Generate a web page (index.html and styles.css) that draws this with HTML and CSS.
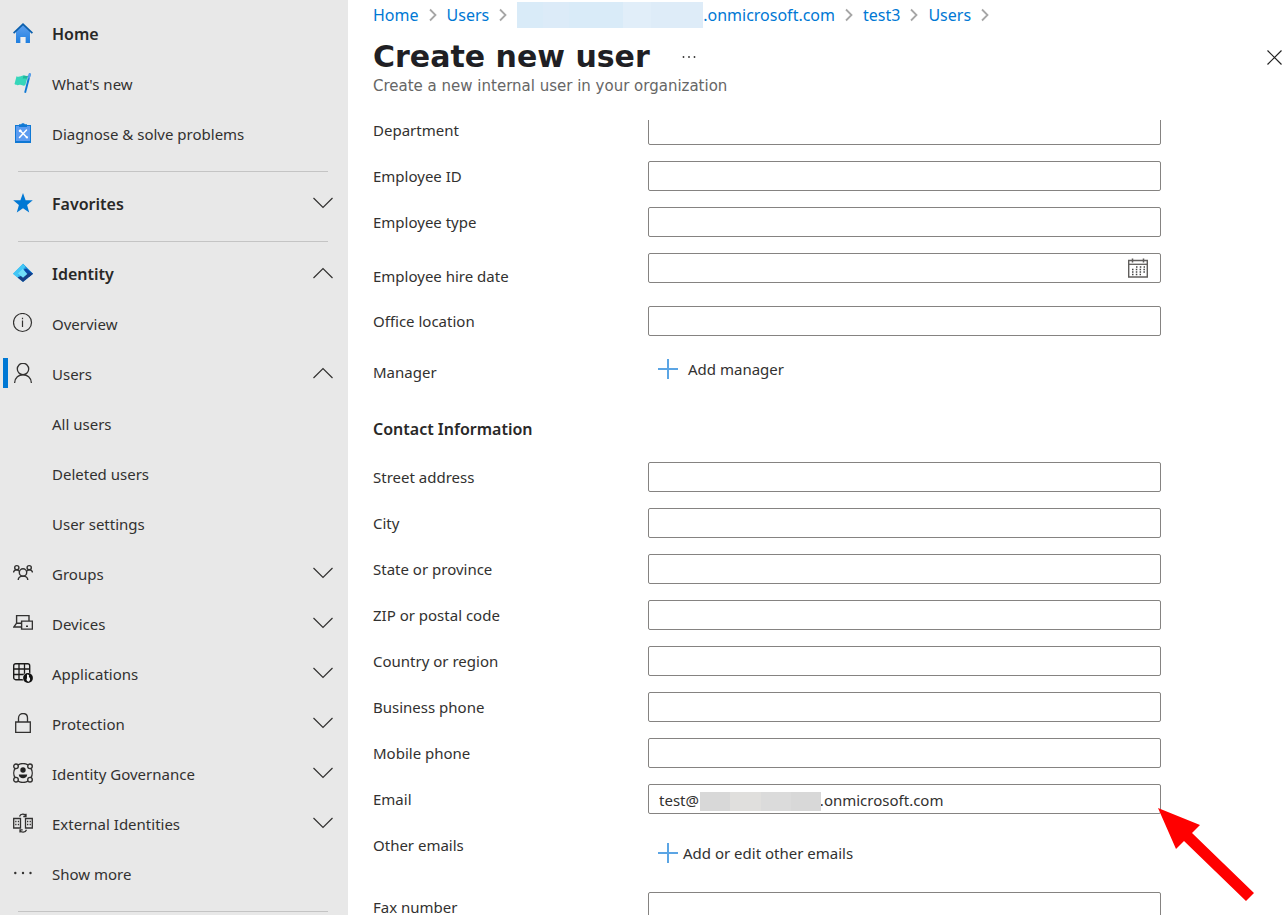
FILE: index.html
```html
<!DOCTYPE html>
<html lang="en">
<head>
<meta charset="utf-8">
<meta name="viewport" content="width=device-width, initial-scale=1">
<title>Create new user</title>
<link rel="stylesheet" href="styles.css">
</head>
<body>
<svg class="defs" aria-hidden="true">
  <defs>
    <linearGradient id="sky" x1="0" y1="0" x2="0" y2="1"><stop offset="0" stop-color="#5ea0ef"/><stop offset="1" stop-color="#1f7fe0"/></linearGradient>
    <symbol id="down" viewBox="0 0 20 12"><path d="M.5 1l9.5 9.5L19.500 1" fill="none" stroke="#323130" stroke-width="1.2"/></symbol>
    <symbol id="up" viewBox="0 0 20 12"><path d="M.5 11L10 1.500l9.500 9.500" fill="none" stroke="#323130" stroke-width="1.2"/></symbol>
    <symbol id="next" viewBox="0 0 8 14"><path d="M1 1.500l5.500 5.500L1 12.500" fill="none" stroke="#a6a6a6" stroke-width="1.800"/></symbol>
    <symbol id="plus" viewBox="0 0 20 20"><path d="M10 0v20M0 10h20" fill="none" stroke="#5ba5e4" stroke-width="2"/></symbol>
  </defs>
</svg>
<div class="app">
  <nav class="sidebar" aria-label="Main">
    <button class="item strong"><svg class="icon" viewBox="0 0 20 20"><path d="M3 8.500L10 2l7 6.500V19.500a.5.5 0 0 1-.5.5h-4v-6h-5v6h-4a.5.5 0 0 1-.5-.5z" fill="url(#sky)"/><path d="M7.700 14h4.600v6H7.700z" fill="#efefef"/><path d="M10 0l10 9.600-1.200 1.200L10 2.600 1.200 10.800 0 9.600z" fill="#0a5fae"/></svg><span>Home</span></button>
    <button class="item"><svg class="icon" viewBox="0 0 20 20"><path d="M16 .2l2 .5L13 20l-1.800-.5z" fill="#0f78d4"/><path d="M16 .2l2 .5-1.400 5-1.700-.5z" fill="#5ea0ef"/><path d="M3.500 3.200c3 2 5.500-1.800 8-.4 1.500.7 2.500.3 3.500 0l-2.700 9.400c-2.300 1.300-3.300-.8-5.500-.4-1.800.4-3.300.8-5.300-.8z" fill="#36d6ba"/><path d="M10.500 2.600c1.800 0 3 .8 4.500.2l-.8 2.700c-1.500.5-3-.5-4.500.2z" fill="#1fb89f"/></svg><span>What's new</span></button>
    <button class="item"><svg class="icon" viewBox="0 0 20 20"><path d="M2 2h16v18H2z" fill="#0f78d4"/><path d="M3 3h14v15H3z" fill="#5b9bf0"/><path d="M6 1.200h2.300C8.500 0 11.500 0 11.700 1.200H14V4H6z" fill="#0f78d4"/><path d="M7 7.500l7 7M13.500 7l-7 7.500" stroke="#fff" stroke-width="1.500" stroke-linecap="round"/><path d="M5.700 7.200l1.600-1 1.500 1.600-1 1.500-1.800-.2z" fill="#fff"/><path d="M13 13l2.200.8-.8 1.700-1.800-.6z" fill="#fff"/></svg><span>Diagnose &amp; solve problems</span></button>
    <hr class="rule">
    <button class="item strong" aria-expanded="false"><svg class="icon" viewBox="0 0 20 20"><path d="M10 0l2.600 7.200h7.200l-5.700 4.700 2.100 7.600L10 15.200l-6.200 4.300 2.100-7.600L.2 7.200h7.200z" fill="#0078d4"/></svg><span>Favorites</span><svg class="chevron"><use href="#down"/></svg></button>
    <hr class="rule">
    <button class="item strong" aria-expanded="true"><svg class="icon" viewBox="0 0 20 20"><path d="M10 .7L20 10.800 10 19 0 10.800z" fill="#35b8f1"/><path d="M10 .7L20 10.800l-5.500 2L10 8.500z" fill="#2196dd"/><path d="M13.500 5.500l6.500 5.300-4 3.300L10 9l1-2.500z" fill="#0b4aa8"/><path d="M4.500 14.500L10 12l6-2 4 .8L10 19z" fill="#173f86"/><path d="M0 10.800L10 .7l2.500 3L5.500 11l-1 3.500z" fill="#43c6f5"/><path d="M9.800 5.800l4.500 5.200-4.300 3.700-5-4.200z" fill="#72def8"/></svg><span>Identity</span><svg class="chevron"><use href="#up"/></svg></button>
    <button class="item"><svg class="icon" viewBox="0 0 20 20"><circle cx="9.500" cy="9.500" r="9" fill="none" stroke="#323130" stroke-width="1.2"/><path d="M9.500 7.500v6.500M9.500 4.800v1.400" stroke="#323130" stroke-width="1.200"/></svg><span>Overview</span></button>
    <button class="item current" aria-expanded="true"><svg class="icon" viewBox="0 0 20 20"><g fill="none" stroke="#323130" stroke-width="1.300"><circle cx="10" cy="6" r="5.700"/><path d="M1.600 20C2 9 18 9 18.400 20"/></g></svg><span>Users</span><svg class="chevron"><use href="#up"/></svg></button>
    <button class="item child"><span>All users</span></button>
    <button class="item child"><span>Deleted users</span></button>
    <button class="item child"><span>User settings</span></button>
    <button class="item" aria-expanded="false"><svg class="icon" viewBox="0 0 20 20"><g fill="none" stroke="#323130" stroke-width="1.400"><circle cx="10" cy="9.500" r="3.700"/><circle cx="3.800" cy="4.700" r="2.100"/><circle cx="16.200" cy="4.700" r="2.100"/><path d="M5.200 17c.3-5.200 9.300-5.200 9.600 0M.5 9.500C1 6.500 4 6 6.500 8.200M19.500 9.500C19 6.500 16 6 13.500 8.200"/></g></svg><span>Groups</span><svg class="chevron"><use href="#down"/></svg></button>
    <button class="item" aria-expanded="false"><svg class="icon" viewBox="0 0 20 20"><g fill="none" stroke="#323130" stroke-width="1.400"><path d="M3.600 10V2.600H16V8M3.600 10.200H8.500M3.600 10.200L.8 14h7.700"/><path d="M8.600 8.100h10.800v8H8.600z"/><path d="M13 13.300h2"/></g></svg><span>Devices</span><svg class="chevron"><use href="#down"/></svg></button>
    <button class="item" aria-expanded="false"><svg class="icon" viewBox="0 0 20 20"><rect x=".7" y=".7" width="16" height="16" rx="2" fill="none" stroke="#1b1a19" stroke-width="1.400"/><path d="M6 .7v16M11.500.7v16M.7 6h16M.7 11.500h16" stroke="#1b1a19" stroke-width="1.300"/><circle cx="15" cy="15" r="5.500" fill="#e8e8e8"/><circle cx="15" cy="15" r="4.900" fill="#111"/><path d="M14 11.500c1.800-.3 2.600 1 1.800 2.300 2 1.500 1.700 3.500 0 5-1.800-.5-3-2-1.800-3.500z" fill="#f5f5f5"/></svg><span>Applications</span><svg class="chevron"><use href="#down"/></svg></button>
    <button class="item" aria-expanded="false"><svg class="icon" viewBox="0 0 20 20"><g fill="none" stroke="#323130" stroke-width="1.300"><path d="M2.700 9h14.600v10.400H2.700zM5.500 9V5c0-6 9-6 9 0v4"/></g></svg><span>Protection</span><svg class="chevron"><use href="#down"/></svg></button>
    <button class="item" aria-expanded="false"><svg class="icon" viewBox="0 0 20 20"><g fill="none" stroke="#323130" stroke-width="1.400"><circle cx="3" cy="3.300" r="2.300"/><circle cx="17" cy="3.300" r="2.300"/><circle cx="3" cy="16.700" r="2.300"/><circle cx="17" cy="16.700" r="2.300"/><path d="M5 1.800C8 .3 12 .3 15 1.800M5 18.200c3 1.500 7 1.500 10 0M2 5.500C.4 8 .4 12 2 14.500M18 5.500c1.600 2.500 1.600 6.500 0 9"/></g><circle cx="10" cy="7" r="2.700" fill="#222"/><path d="M5.800 11.400h8.400c0 5-8.400 5-8.400 0z" fill="#222"/></svg><span>Identity Governance</span><svg class="chevron"><use href="#down"/></svg></button>
    <button class="item" aria-expanded="false"><svg class="icon" viewBox="0 0 20 20"><g fill="none" stroke="#323130" stroke-width="1.300"><path d="M.7 5.500h6.800v9.500H.7zM12.500 5.500h6.800v9.500h-6.800z"/><path d="M6.500 3.500c1-3.200 5.500-3.200 6.500-.5M13 .8v2.700h-2.700M13.500 16.700c-1 3.200-5.500 3.200-6.500.5M7 19.500v-2.700h2.700"/><path d="M2.200 8.500h1.300M4.800 8.500h1.300M2.200 11.500h1.300M4.800 11.500h1.300M14 8.500h1.300M16.600 8.500h1.300M14 11.500h1.300M16.600 11.500h1.300"/></g></svg><span>External Identities</span><svg class="chevron"><use href="#down"/></svg></button>
    <button class="item"><svg class="icon" viewBox="0 0 20 20"><g fill="#323130"><circle cx="2.300" cy="10" r="1.200"/><circle cx="10" cy="10" r="1.200"/><circle cx="17.500" cy="10" r="1.200"/></g></svg><span>Show more</span></button>
    <hr class="rule">
  </nav>

  <main class="main">
    <nav class="crumbs" aria-label="Breadcrumb">
      <a href="#">Home</a><svg class="next"><use href="#next"/></svg>
      <a href="#">Users</a><svg class="next"><use href="#next"/></svg>
      <a href="#" class="tenant"><span class="mask"></span>.onmicrosoft.com</a><svg class="next"><use href="#next"/></svg>
      <a href="#">test3</a><svg class="next"><use href="#next"/></svg>
      <a href="#">Users</a><svg class="next"><use href="#next"/></svg>
    </nav>
    <header class="head">
      <h1 class="title">Create new user</h1>
      <button class="plain" aria-label="More"><svg class="dots" viewBox="0 0 14 4"><g fill="#323130"><circle cx="1.500" cy="2" r=".9"/><circle cx="7" cy="2" r=".9"/><circle cx="12.500" cy="2" r=".9"/></g></svg></button>
      <button class="plain close" aria-label="Close"><svg class="cross" viewBox="0 0 15 15"><path d="M.5.5l14 14M14.500.5l-14 14" stroke="#222" stroke-width="1.200"/></svg></button>
    </header>
    <p class="subtitle">Create a new internal user in your organization</p>

    <div class="scroller">
      <form class="form">
        <div class="row"><label for="dept">Department</label><input class="box" id="dept" type="text"></div>
        <div class="row"><label for="eid">Employee ID</label><input class="box" id="eid" type="text"></div>
        <div class="row"><label for="etype">Employee type</label><input class="box" id="etype" type="text"></div>
        <div class="row date"><label for="hire">Employee hire date</label>
          <div class="field"><input class="box" id="hire" type="text"><svg class="calendar" viewBox="0 0 20 20"><path d="M.7 2.500h18.600v16.500H.7z" fill="none" stroke="#605e5c" stroke-width="1.400"/><path d="M0 6.300h20" stroke="#605e5c" stroke-width="1.300"/><path d="M4.500.5v4M15.500.5v4" stroke="#605e5c" stroke-width="1.500"/><path d="M8 9h9M4 11.500h13M4 14h13M4 16.500h9" stroke="#444" stroke-width="1.300" stroke-dasharray="1.500 2.300"/></svg></div></div>
        <div class="row"><label for="office">Office location</label><input class="box" id="office" type="text"></div>
        <div class="row manager"><label for="manager">Manager</label><button type="button" class="add roomy" id="manager"><svg class="plus"><use href="#plus"/></svg>Add manager</button></div>
        <h2 class="section">Contact Information</h2>
        <div class="row"><label for="street">Street address</label><input class="box" id="street" type="text"></div>
        <div class="row"><label for="city">City</label><input class="box" id="city" type="text"></div>
        <div class="row"><label for="state">State or province</label><input class="box" id="state" type="text"></div>
        <div class="row"><label for="zip">ZIP or postal code</label><input class="box" id="zip" type="text"></div>
        <div class="row"><label for="country">Country or region</label><input class="box" id="country" type="text"></div>
        <div class="row"><label for="business">Business phone</label><input class="box" id="business" type="text"></div>
        <div class="row"><label for="mobile">Mobile phone</label><input class="box" id="mobile" type="text"></div>
        <div class="row"><label for="email">Email</label>
          <div class="field"><input class="box" id="email" type="text" value="test@&nbsp;&nbsp;&nbsp;&nbsp;&nbsp;&nbsp;&nbsp;&nbsp;&nbsp;&nbsp;&nbsp;&nbsp;&nbsp;&nbsp;&nbsp;&nbsp;&nbsp;&nbsp;&nbsp;&nbsp;&nbsp;&nbsp;&nbsp;&nbsp;&nbsp;&nbsp;&nbsp;&nbsp;&nbsp;&nbsp;&nbsp;.onmicrosoft.com"><span class="mask grey"></span>
            <svg class="arrow" viewBox="0 0 96 94" aria-hidden="true"><path d="M0 0l42 17-8 8 62 60-8 8-62-60-8 8z" fill="#f00"/></svg></div></div>
        <div class="row other"><label for="others">Other emails</label><button type="button" class="add" id="others"><svg class="plus"><use href="#plus"/></svg>Add or edit other emails</button></div>
        <div class="row"><label for="fax">Fax number</label><input class="box" id="fax" type="text"></div>
      </form>
    </div>
  </main>
</div>
</body>
</html>
```
FILE: styles.css
```css
* { box-sizing: border-box; }
body { margin: 0; background: #fff; color: #323130; font: 15px/20px "Noto Sans", "Open Sans", sans-serif; }
button, input { font: inherit; color: inherit; }
button { padding: 0; border: 0; background: none; text-align: left; cursor: pointer; }
svg { display: block; flex: none; }
.defs { position: absolute; width: 0; height: 0; }

.app { display: flex; height: 100vh; overflow: hidden; }

.sidebar { flex: 0 0 348px; padding-top: 8px; background: #e8e8e8; overflow: hidden; }
.item { display: flex; align-items: center; gap: 19px; width: 100%; height: 50px; padding: 0 15px 0 13px; }
.item span { padding-top: 2px; }
.item.strong { font-size: 16px; font-weight: 600; color: #292827; }
.item.child { padding-left: 52px; }
.item.current { padding-left: 3px; }
.item.current::before { content: ""; width: 5px; height: 30px; margin-right: -14px; background: #0078d4; }
.icon { width: 20px; height: 20px; }
.chevron { width: 20px; height: 12px; margin-left: auto; }
.rule { height: 1px; margin: 13px 20px 6px 18px; border: 0; background: #c4c4c4; }

.main { flex: 1; min-width: 0; display: flex; flex-direction: column; padding-left: 25px; }
.crumbs { display: flex; align-items: center; gap: 10px; height: 30px; font-size: 16px; }
.crumbs a { color: #0078d4; text-decoration: none; }
.tenant { display: flex; align-items: center; }
.next { width: 8px; height: 14px; }
.mask { width: 186px; height: 26px; background: linear-gradient(90deg, #d9ebf8 0 14%, #dcebf8 14% 28%, #d9ebf8 28% 57%, #e1eef9 57% 72%, #deecf8 72%); }

.head { display: flex; align-items: center; margin-top: 8px; padding-right: 2px; }
.title { margin: 0 32px 0 0; color: #201f24; font: bold 30px/38px "DejaVu Sans", sans-serif; }
.dots { width: 14px; height: 4px; }
.close { margin-left: auto; }
.cross { width: 15px; height: 15px; }
.subtitle { margin: 0 0 24px; color: #666; font: 15px/20px "DejaVu Sans", sans-serif; }

.scroller { flex: 1; min-height: 0; overflow: hidden; }
.form { display: flex; flex-direction: column; gap: 16px; max-width: 788px; margin-top: -5px; }
.row { display: grid; grid-template-columns: 275px 1fr; align-items: start; }
.row label { padding-top: 5px; }
.date { height: 37px; }
.date label { padding-top: 13px; }
.manager label { padding-top: 10px; }
.box { display: block; width: 100%; height: 30px; padding: 2px 10px 0; border: 1px solid #858381; border-radius: 2px; background: #fff; outline: 0; }
.field { position: relative; }
.calendar { position: absolute; top: 5px; right: 13px; width: 20px; height: 20px; }
.mask.grey { position: absolute; top: 8px; left: 52px; width: 121px; height: 19px; background: linear-gradient(90deg, #d8d8d8 0 25%, #e0dfdd 25% 50%, #dbdbdb 50% 75%, #d8d8d8 75%); }
.arrow { position: absolute; top: 24px; left: calc(100% - 3px); z-index: 1; width: 96px; height: 94px; }
.add { display: flex; align-items: center; gap: 5px; justify-self: start; height: 46px; padding-left: 10px; }
.add.roomy { gap: 10px; height: 34px; }
.manager { height: 42px; }
.plus { width: 20px; height: 20px; }
.section { margin: 7px 0 5px; color: #292827; font-size: 16px; font-weight: 600; line-height: 24px; }
```
